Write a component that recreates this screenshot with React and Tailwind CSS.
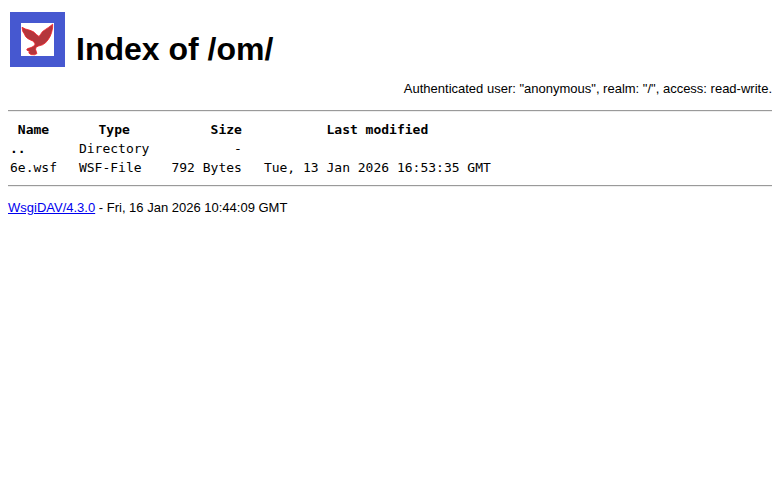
import React from 'react';

const entries = [
  { name: '..', href: '../', type: 'Directory', size: '-', modified: '', parent: true },
  { name: '6e.wsf', href: '6e.wsf', type: 'WSF-File', size: '792 Bytes', modified: 'Tue, 13 Jan 2026 16:53:35 GMT' },
];

function Logo() {
  return (
    <svg className="w-[55px] h-[55px] shrink-0" viewBox="0 0 55 55" role="img" aria-label="WsgiDAV">
      <rect width="55" height="55" fill="#4658d0" />
      <rect x="11" y="11" width="33" height="33" fill="#fff" />
      <path
        d="M12 15.3 L15.5 17 L20 18.3 L23.5 19.8 L26.5 22.6 L29 24.5 L30.5 22.4 L32.5 19.6 L35.5 17.4 L38.5 15.4 L42.7 12.2 L42.6 16 L41.6 20.5 L40.3 24 L38.3 27.5 L35.5 30.8 L32.5 32.8 L28.5 34 L26 35.2 L25.6 37.5 L26.9 41.6 L24.5 42.8 L21 42.6 L18.8 41 L19.5 39.6 L16.7 38 L17.5 36.6 L21 35.6 L24 34 L25.2 32 L23.3 29.2 L20.5 28 L17.5 26.4 L15.5 24.4 L14.4 22 L12.8 19.5 Z"
        fill="#b4363c"
        stroke="#f21c24"
        strokeWidth="0.8"
      />
    </svg>
  );
}

// Two-tone rule: dark line on top, light line below
function Rule() {
  return <hr className="my-[7px] border-t border-b border-t-[#9a9a9a] border-b-[#eeeeee]" />;
}

export default function App() {
  return (
    <div className="bg-white text-black p-2 font-['Liberation_Sans',Arial,sans-serif] text-[13px] leading-[15px]">
      {/* Header */}
      <header className="flex items-center gap-[11px] pt-1 pl-0.5">
        <Logo />
        <h1 className="text-[32px] leading-9 font-bold pt-[19px]">Index of /om/</h1>
      </header>
      <p className="py-[7px] mt-[7px] text-right">Authenticated user: "anonymous", realm: "/", access: read-write.</p>

      <Rule />

      {/* Directory listing */}
      <table className="border-separate border-spacing-0.5 font-['DejaVu_Sans_Mono',monospace] leading-[17px]">
        <thead>
          <tr>
            <th className="pr-5">Name</th>
            <th className="pr-5">Type</th>
            <th className="pr-5 text-right">Size</th>
            <th>Last modified</th>
          </tr>
        </thead>
        <tbody>
          {entries.map((entry) => (
            <tr key={entry.name}>
              <td className="pr-5">
                <a href={entry.href} className={entry.parent ? 'font-bold' : ''}>{entry.name}</a>
              </td>
              <td className="pr-5">{entry.type}</td>
              <td className="pr-5 text-right">{entry.size}</td>
              <td>{entry.modified}</td>
            </tr>
          ))}
        </tbody>
      </table>

      <Rule />

      <footer className="py-1.5">
        <a href="https://github.com/mar10/wsgidav/" className="text-[#0000ee] underline">WsgiDAV/4.3.0</a> - Fri, 16 Jan 2026 10:44:09 GMT
      </footer>
    </div>
  );
}
